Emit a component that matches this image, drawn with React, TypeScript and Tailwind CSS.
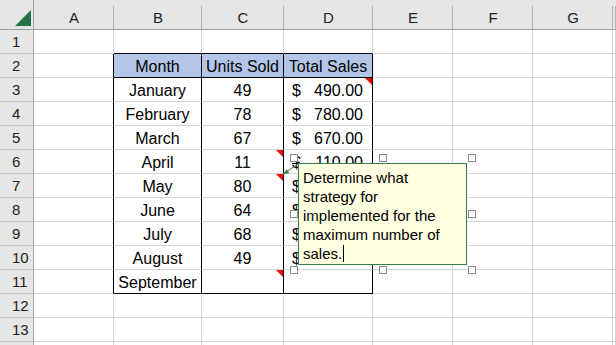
import React from 'react';

type Cell = { text?: string; money?: string; strike?: boolean; note?: boolean };

const cols = ['A', 'B', 'C', 'D', 'E', 'F', 'G', ''];

// row number -> cells by column letter (D7:D10 sit under the comment, only "$" shows)
const data: Record<number, Record<string, Cell>> = {
  2: { B: { text: 'Month' }, C: { text: 'Units Sold' }, D: { text: 'Total Sales' } },
  3: { B: { text: 'January' }, C: { text: '49' }, D: { money: '490.00', note: true } },
  4: { B: { text: 'February' }, C: { text: '78' }, D: { money: '780.00' } },
  5: { B: { text: 'March' }, C: { text: '67' }, D: { money: '670.00' } },
  6: { B: { text: 'April' }, C: { text: '11', note: true }, D: { money: '110.00', strike: true } },
  7: { B: { text: 'May' }, C: { text: '80', note: true }, D: { money: '' } },
  8: { B: { text: 'June' }, C: { text: '64' }, D: { money: '' } },
  9: { B: { text: 'July' }, C: { text: '68' }, D: { money: '' } },
  10: { B: { text: 'August' }, C: { text: '49' }, D: { money: '' } },
  11: { B: { text: 'September' }, C: { note: true } },
};

const inTable = (c: string) => c === 'B' || c === 'C' || c === 'D';

const DataCell = ({ row, col }: { row: number; col: string }) => {
  const cell = data[row]?.[col];
  const blackRight = ['A', 'B', 'C', 'D'].includes(col) && row >= 2 && row <= 11;
  const blackBottom = inTable(col) && (row === 1 || row === 2 || row === 11);
  const header = row === 2 && inTable(col);

  return (
    <div
      className={`relative flex items-center justify-center pt-[2px] border-r border-b text-[16px] text-black ${
        blackRight ? 'border-r-black' : 'border-r-[#d4d4d4]'
      } ${blackBottom ? 'border-b-black' : 'border-b-[#d4d4d4]'} ${header ? 'bg-[#b4c6e7]' : 'bg-white'}`}
    >
      {cell?.text && <span className="whitespace-nowrap">{cell.text}</span>}
      {cell?.money !== undefined && (
        <div className={`flex w-full justify-between pl-[8px] pr-[9px] ${cell.strike ? 'line-through' : ''}`}>
          <span>$</span>
          {cell.money && <span>{cell.money}</span>}
        </div>
      )}
      {cell?.note && (
        <div className="absolute top-0 right-0 w-[7px] h-[7px] bg-[#ff0000] [clip-path:polygon(0_0,100%_0,100%_100%)]" />
      )}
    </div>
  );
};

const Handle = ({ x, y }: { x: string; y: string }) => (
  <div className={`absolute ${x} ${y} w-[8px] h-[8px] bg-white border border-[#8c8c8c]`} />
);

export default function App() {
  const rows = Array.from({ length: 13 }, (_, i) => i + 1);

  return (
    <div
      className="relative w-[616px] h-[345px] overflow-hidden bg-white"
      style={{ fontFamily: '"Liberation Sans", Arial, sans-serif' }}
    >
      <div className="grid h-full grid-cols-[34px_80px_88px_82px_89px_80px_80px_80px_1fr] grid-rows-[30px_repeat(13,24px)_1fr]">
        {/* corner */}
        <div className="relative bg-[#e6e6e6] border-r border-b border-r-[#a6a6a6] border-b-[#9e9e9e]">
          <svg className="absolute inset-0" width="34" height="30">
            <polygon points="31,10 31,26 15,26" fill="#217346" />
          </svg>
        </div>
        {/* column headers */}
        {cols.map((c, i) => (
          <div
            key={'h' + i}
            className="relative flex items-center justify-center pt-[8px] bg-[#e6e6e6] border-b border-b-[#9e9e9e] text-[15px] text-[#222] after:absolute after:right-0 after:top-[6px] after:bottom-0 after:w-px after:bg-[#b3b3b3]"
          >
            {c}
          </div>
        ))}

        {rows.map((r) => (
          <React.Fragment key={r}>
            <div className="flex items-center pl-[12px] pt-[1px] bg-[#e6e6e6] border-r border-b border-r-[#a6a6a6] border-b-[#c8c8c8] text-[15px] text-[#222]">
              {r}
            </div>
            {cols.map((c, i) => (
              <DataCell key={r + '-' + i} row={r} col={c} />
            ))}
          </React.Fragment>
        ))}

        {/* partial row 14 */}
        <div className="bg-[#e6e6e6] border-r border-r-[#a6a6a6]" />
        {cols.map((c, i) => (
          <div key={'z' + i} className="border-r border-r-[#d4d4d4]" />
        ))}
      </div>

      {/* comment selection handles */}
      <Handle x="left-[290px]" y="top-[154px]" />
      <Handle x="left-[379px]" y="top-[154px]" />
      <Handle x="left-[468px]" y="top-[154px]" />
      <Handle x="left-[290px]" y="top-[210px]" />
      <Handle x="left-[468px]" y="top-[210px]" />
      <Handle x="left-[290px]" y="top-[266px]" />
      <Handle x="left-[379px]" y="top-[266px]" />
      <Handle x="left-[468px]" y="top-[266px]" />

      {/* comment box */}
      <div className="absolute left-[298px] top-[163px] w-[169px] h-[102px] border border-[#3b7d52] bg-[#ffffe1] pl-[4px] pt-[4px] text-[15px] leading-[19px] text-black">
        <div className="whitespace-nowrap">Determine what</div>
        <div className="whitespace-nowrap">strategy for</div>
        <div className="whitespace-nowrap">implemented for the</div>
        <div className="whitespace-nowrap">maximum number of</div>
        <div className="whitespace-nowrap flex items-center">
          sales.
          <span className="inline-block w-px h-[17px] bg-black ml-px" />
        </div>
      </div>

      {/* comment arrow */}
      <svg className="absolute inset-0 pointer-events-none" width="616" height="345">
        <line x1="298.5" y1="163.5" x2="287.5" y2="171.2" stroke="#3b7d52" strokeWidth="1" />
        <polygon points="283,174.5 289.3,173.1 286.5,169" fill="#3b7d52" />
      </svg>
    </div>
  );
}
